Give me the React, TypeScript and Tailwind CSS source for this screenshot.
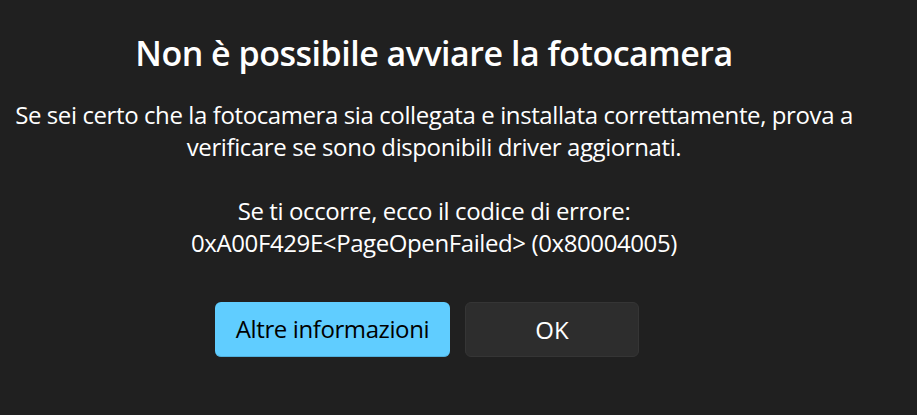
const App = () => {
  return (
    <div
      className="h-[415px] w-[917px] bg-[#202020] text-white flex flex-col items-center pr-[49px]"
      style={{ fontFamily: '"Open Sans", "Noto Sans", sans-serif' }}
    >
      <h1 className="mt-[31px] text-[34px] leading-[44px] font-semibold whitespace-nowrap tracking-[-0.5px]">
        Non è possibile avviare la fotocamera
      </h1>
      <div className="mt-[24px] text-[24px] leading-[32px] text-center whitespace-nowrap tracking-[-0.4px]">
        <p>Se sei certo che la fotocamera sia collegata e installata correttamente, prova a</p>
        <p>verificare se sono disponibili driver aggiornati.</p>
        <p className="mt-[32px]">Se ti occorre, ecco il codice di errore:</p>
        <p>0xA00F429E&lt;PageOpenFailed&gt; (0x80004005)</p>
      </div>
      <div className="mt-[43px] pr-[14px] flex gap-[15px]">
        <button className="h-[55px] w-[235px] rounded-[6px] bg-[#60cdff] border-b border-[#4fb0dd] text-black text-[24px] tracking-[-0.4px]">
          Altre informazioni
        </button>
        <button className="h-[55px] w-[174px] rounded-[6px] bg-[#2d2d2d] border border-[#353535] text-white text-[24px]">
          OK
        </button>
      </div>
    </div>
  );
};

export default App;
